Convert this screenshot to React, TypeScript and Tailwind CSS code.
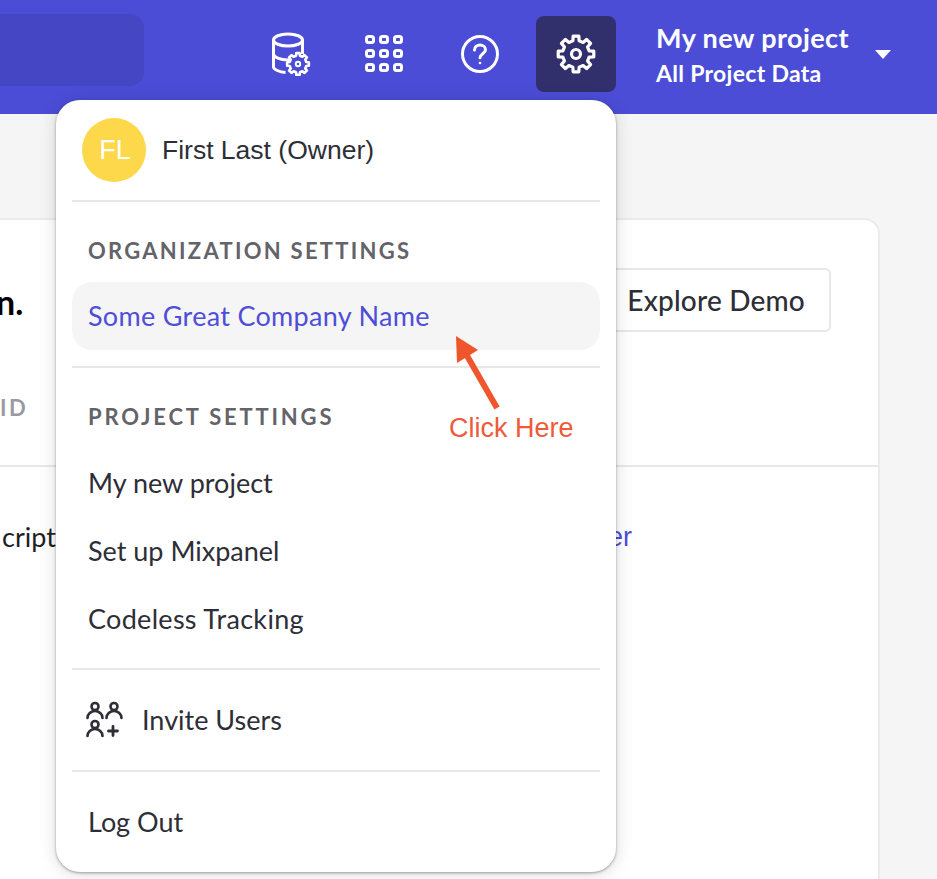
const gearPath = (cx: number, cy: number, outer: number, inner: number, teeth = 8) => {
  // toothed outline, one tooth every 45deg
  const pts: string[] = [];
  const step = (Math.PI * 2) / teeth;
  for (let i = 0; i < teeth; i++) {
    const a = i * step - Math.PI / 2;
    const offsets: [number, number][] = [
      [-0.3, inner],
      [-0.2, outer],
      [0.2, outer],
      [0.3, inner],
    ];
    for (const [o, r] of offsets) {
      const t = a + o * step;
      pts.push(`${(cx + Math.cos(t) * r).toFixed(2)} ${(cy + Math.sin(t) * r).toFixed(2)}`);
    }
  }
  return `M${pts.join("L")}Z`;
};

function DataIcon() {
  return (
    <svg width="40" height="44" viewBox="0 0 40 44" fill="none" stroke="white" strokeWidth="3" strokeLinejoin="round">
      <ellipse cx="16" cy="8" rx="14.5" ry="6" />
      <path d="M1.5 8v27c0 2.5 6 5 12 5.5M1.5 22c0 3 6.500 6 14.500 6 3 0 6-.4 8-1M30.500 8v14" />
      <path d={gearPath(26, 32, 11, 8.500)} fill="#4b4dd7" strokeWidth="2.600" />
      <circle cx="26" cy="32" r="2.200" strokeWidth="2" />
    </svg>
  );
}

function GridIcon() {
  const cells = [0, 1, 2, 3, 4, 5, 6, 7, 8];
  return (
    <svg width="38" height="38" viewBox="0 0 38 38" fill="none" stroke="white" strokeWidth="3">
      {cells.map((c) => (
        <rect key={c} x={1.5 + (c % 3) * 14} y={1.5 + Math.floor(c / 3) * 14} width="7" height="6" rx="2" />
      ))}
    </svg>
  );
}

function HelpIcon() {
  return (
    <svg width="40" height="40" viewBox="0 0 40 40" fill="none" stroke="white" strokeWidth="3" strokeLinecap="round">
      <circle cx="20" cy="20" r="17.500" />
      <path d="M14.500 16c0-3 2.400-5 5.500-5s5.500 2 5.500 4.800c0 3.900-5.500 4-5.500 8" />
      <circle cx="20" cy="29" r="1.300" fill="white" stroke="none" />
    </svg>
  );
}

function GearIcon() {
  return (
    <svg width="40" height="40" viewBox="0 0 40 40" fill="none" stroke="white" strokeWidth="3.200" strokeLinejoin="round">
      <path d={gearPath(20, 20, 18, 13.500)} />
      <circle cx="20" cy="20" r="4.500" />
    </svg>
  );
}

function InviteIcon() {
  return (
    <svg width="38" height="38" viewBox="0 0 38 38" fill="none" stroke="#2e2e36" strokeWidth="2.600" strokeLinecap="round">
      <circle cx="9" cy="5.500" r="3.500" />
      <circle cx="28" cy="5.500" r="3.500" />
      <circle cx="9" cy="23.500" r="3.500" />
      <path d="M1.500 17c0-4 3.500-7 7.500-7s7.500 3 7.500 7M20.500 17c0-4 3.500-7 7.500-7s7.500 3 7.500 7M1.500 35c0-4 3.500-7 7.500-7s7.500 3 7.500 7" />
      <path d="M27 25.500v9M22.500 30h9" strokeWidth="2.800" />
    </svg>
  );
}

const Divider = () => <div className="mx-4 h-[2px] bg-[#e8e8e8]" />;

const sectionLabel = "flex h-[34px] items-center px-8 text-[22px] font-bold text-[#636369] uppercase";

const projectLinks = [
  { label: "My new project", spacing: "tracking-normal" },
  { label: "Set up Mixpanel", spacing: "tracking-normal" },
  { label: "Codeless Tracking", spacing: "tracking-[0.3px]" },
];

function SettingsMenu() {
  return (
    <div className="absolute top-[100px] left-[56px] w-[560px] rounded-[24px] bg-white pt-[18px] text-[27px] text-[#2e2e36] shadow-[0_1px_3px_rgba(0,0,0,0.35),0_2px_18px_rgba(0,0,0,0.14)]">
      <div className="flex items-center gap-4 pl-[26px]">
        <div className="flex h-16 w-16 items-center justify-center rounded-full bg-[#fcd84a] pl-[2px] font-['Liberation_Sans',sans-serif] text-[27px] text-white">
          FL
        </div>
        <span className="pt-[2px] font-['Liberation_Sans',sans-serif] text-[26.500px]">First Last (Owner)</span>
      </div>
      <div className="mt-[18px]">
        <Divider />
      </div>

      <div className={`mt-[31px] tracking-[2.270px] ${sectionLabel}`}>Organization Settings</div>
      <div className="mx-4 mt-[15px] flex h-[68px] items-center rounded-[20px] bg-[#f5f5f5] px-4 tracking-[0.300px] text-[#4e4ed8]">
        Some Great Company Name
      </div>
      <div className="mt-4">
        <Divider />
      </div>

      <div className={`mt-[31px] tracking-[2.800px] ${sectionLabel}`}>Project Settings</div>
      <div className="mt-4 mb-[15px]">
        {projectLinks.map((item) => (
          <div key={item.label} className={`flex h-[68px] items-center px-8 ${item.spacing}`}>
            {item.label}
          </div>
        ))}
      </div>
      <Divider />

      <div className="flex h-[100px] items-center gap-[18px] pl-[30px]">
        <InviteIcon />
        <span>Invite Users</span>
      </div>
      <Divider />
      <div className="flex h-[100px] items-center px-8">Log Out</div>

      {/* annotation drawn over the screenshot */}
      <svg className="absolute top-[232px] left-[396px]" width="50" height="80" viewBox="0 0 50 80" fill="none">
        <path d="M4 4L26 18 5 31Z" fill="#f0562d" />
        <path d="M14 22L45 76" stroke="#f0562d" strokeWidth="6" />
      </svg>
      <span className="absolute top-[312px] left-[393px] font-['Liberation_Sans',sans-serif] text-[27px] leading-8 whitespace-nowrap text-[#ee5a3a]">
        Click Here
      </span>
    </div>
  );
}

export default function App() {
  return (
    <div className="relative h-[879px] w-[937px] overflow-hidden bg-[#f5f5f5] font-['Lato',sans-serif]">
      <header className="flex h-[114px] items-start bg-[#4b4dd7] text-white">
        <div className="mt-[14px] h-[72px] w-[144px] rounded-r-[14px] bg-[#4546c4]" />
        <div className="ml-[128px] flex h-[108px] items-center">
          <DataIcon />
        </div>
        <div className="ml-[53px] flex h-[108px] items-center">
          <GridIcon />
        </div>
        <div className="ml-[57px] flex h-[108px] items-center">
          <HelpIcon />
        </div>
        <div className="mt-4 ml-[36px] flex h-[76px] w-20 items-center justify-center rounded-lg bg-[#312f6c]">
          <GearIcon />
        </div>
        <div className="mt-[20px] ml-10 flex flex-col">
          <span className="text-[27px] leading-9 font-bold tracking-[0.400px]">My new project</span>
          <span className="text-[23px] leading-[34px] font-bold tracking-[0.300px]">All Project Data</span>
        </div>
        <div className="mt-[50px] ml-[26px] h-0 w-0 border-x-8 border-t-[9px] border-x-transparent border-t-white" />
      </header>

      <main className="pt-[104px]">
        <section className="-ml-10 h-[700px] w-[920px] rounded-[16px] border-2 border-[#ebebeb] bg-white">
          <div className="flex h-[247px] flex-col justify-between border-b-2 border-[#e8e8e8] pb-[41px] pl-[38px]">
            <div className="flex items-start justify-between pt-12 pr-[47px]">
              <h1 className="mt-1 -ml-1 text-[34px] leading-[60px] font-bold text-black">n.</h1>
              <button className="h-16 w-[300px] rounded-md border-2 border-[#e8e8e8] pr-6 text-right text-[28px] font-medium tracking-[0.200px] text-[#2e2e36]">
                Explore Demo
              </button>
            </div>
            <span className="text-[22px] font-bold tracking-[2.600px] text-[#9a9a9f]">ID</span>
          </div>
          <div className="flex justify-between pt-[52px] pr-[246px] pl-10 text-[27px] leading-9">
            <span className="text-[#1f1f24]">cript</span>
            <span className="font-['Liberation_Sans',sans-serif] text-[#4e4ed8]">Developer</span>
          </div>
        </section>
      </main>

      <SettingsMenu />
    </div>
  );
}
